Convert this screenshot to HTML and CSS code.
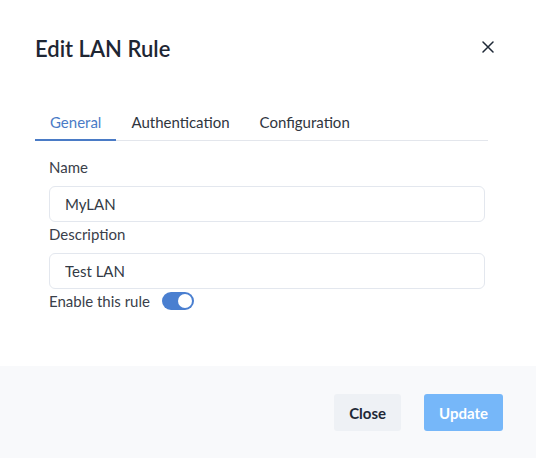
FILE: index.html
```html
<!DOCTYPE html>
<html lang="en">
<head>
<meta charset="utf-8">
<title>Edit LAN Rule</title>
<link rel="stylesheet" href="styles.css">
</head>
<body>
<div class="dialog">
  <div class="header">
    <h1 class="title">Edit LAN Rule</h1>
    <button class="close-x" aria-label="Close">
      <svg width="12" height="12" viewBox="0 0 12 12"><path d="M1 1L11 11M11 1L1 11" stroke="#1f2937" stroke-width="1.5" stroke-linecap="round" fill="none"/></svg>
    </button>
  </div>
  <div class="tabs">
    <div class="tab active">General</div>
    <div class="tab">Authentication</div>
    <div class="tab">Configuration</div>
  </div>
  <div class="form">
    <label class="label">Name</label>
    <input class="input" type="text" value="MyLAN">
    <label class="label second">Description</label>
    <input class="input" type="text" value="Test LAN">
    <div class="toggle-row">
      <span class="label-inline">Enable this rule</span>
      <span class="toggle"><span class="knob"></span></span>
    </div>
  </div>
  <div class="footer">
    <button class="btn btn-close">Close</button>
    <button class="btn btn-update">Update</button>
  </div>
</div>
</body>
</html>
```
FILE: styles.css
```css
* { box-sizing: border-box; }
html, body { margin: 0; padding: 0; background: #ffffff; }
body { font-family: Lato, "Noto Sans", sans-serif; }
.dialog { display: flex; flex-direction: column; height: 458px; }
.header { display: flex; justify-content: space-between; align-items: flex-start; padding: 36px 42px 0 35px; }
.title { margin: 0; font-size: 22px; line-height: 26px; font-weight: 600; color: #1e2633; }
.close-x { margin-top: 5px; padding: 0; border: 0; background: none; width: 12px; height: 12px; display: block; }
.close-x svg { display: block; }
.tabs { display: flex; margin: 41px 48px 0 35px; border-bottom: 1px solid #e3e6ec; }
.tab { font-size: 15px; line-height: 22px; padding: 8px 15px 6px; color: #2f353e; border-bottom: 2px solid transparent; margin-bottom: -1px; }
.tab.active { color: #4a7bc6; border-bottom-color: #4a7bc6; }
.form { display: flex; flex-direction: column; padding: 15px 51px 0 49px; }
.label { font-size: 15px; line-height: 22px; color: #3a404a; }
.label.second { margin-top: 1px; }
.input { margin-top: 8px; height: 36px; width: 100%; border: 1px solid #e3e7ee; border-radius: 6px; padding: 0 15px; font-family: Lato, "Noto Sans", sans-serif; font-size: 15px; color: #333a45; background: #fff; outline: none; }
.toggle-row { display: flex; align-items: center; margin-top: 1px; height: 22px; }
.label-inline { font-size: 15px; line-height: 22px; color: #3a404a; }
.toggle { position: relative; margin-left: 12px; width: 32px; height: 18px; border-radius: 9px; background: #4a7fd0; display: inline-block; }
.knob { position: absolute; right: 2px; top: 2px; width: 14px; height: 14px; border-radius: 50%; background: #fff; }
.footer { margin-top: auto; height: 92px; background: #f8f9fb; display: flex; justify-content: flex-end; align-items: flex-start; gap: 23px; padding: 28px 33px 0 0; }
.btn { height: 37px; border: 0; border-radius: 3px; padding: 0 15px; font-family: Lato, "Noto Sans", sans-serif; font-size: 15px; font-weight: 700; }
.btn-close { background: #eef1f5; color: #1f2937; }
.btn-update { background: #76b7f9; color: #ffffff; }
```
